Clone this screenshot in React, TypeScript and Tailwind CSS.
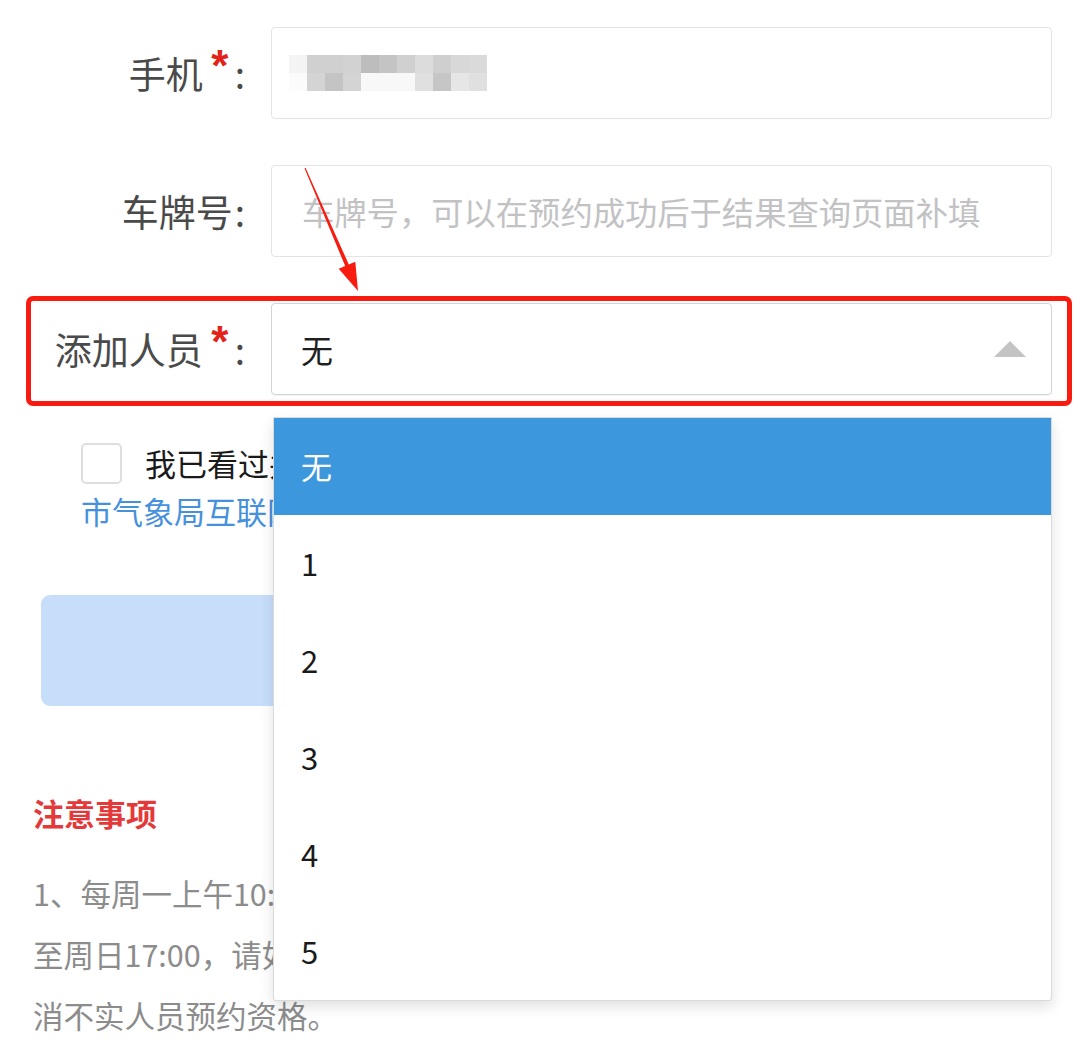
import { ReactNode } from 'react'

const FONT = "font-['Noto_Sans_CJK_SC','Noto_Sans',sans-serif]"

// mosaic over the phone number (two rows of 18px blocks)
const MOSAIC: string[][] = [
  ['#f4f4f4', '#d0d0d0', '#d0d0d0', '#d2d2d2', '#bdbdbd', '#c4c4c4', '#d0d0d0', '#dcdcdc', '#cfcfcf', '#d8d8d8', '#dadada'],
  ['#fbfbfb', '#d4d4d4', '#c4c4c4', '#d4d4d4', '#f8f8f8', '#f8f8f8', '#f8f8f8', '#e0e0e0', '#c6c6c6', '#e6e6e6', '#e0e0e0'],
]

const OPTIONS = ['无', '1', '2', '3', '4', '5']

function Label({ text, required }: { text: string; required?: boolean }) {
  return (
    <div className="w-[245px] shrink-0 flex items-center justify-end text-[37px] text-[#4a4a4a] leading-none">
      <span>{text}</span>
      {required && (
        <span className="w-[30px] pl-[4px] text-center -mt-[14px] text-[44px] leading-none font-bold text-[#e3231a] font-['Liberation_Sans',sans-serif]">
          *
        </span>
      )}
      <span className="ml-[2px]">:</span>
    </div>
  )
}

function Row({ label, required, children }: { label: string; required?: boolean; children: ReactNode }) {
  return (
    <div className="flex items-center h-[92px] pr-[22px]">
      <Label text={label} required={required} />
      <div className="ml-[26px] flex-1 h-full">{children}</div>
    </div>
  )
}

export default function App() {
  return (
    <div className={`relative w-[1074px] h-[1043px] overflow-hidden bg-white ${FONT}`}>
      <div className="pt-[27px] flex flex-col gap-[46px]">
        <Row label="手机" required>
          <div className="h-full border border-[#e3e3e3] rounded-[4px] flex items-center pl-[17px]">
            <div className="flex flex-col">
              {MOSAIC.map((row, i) => (
                <div key={i} className="flex">
                  {row.map((c, j) => (
                    <div key={j} className="w-[18px] h-[18px]" style={{ background: c }} />
                  ))}
                </div>
              ))}
            </div>
          </div>
        </Row>

        <Row label="车牌号">
          <div className="h-full border border-[#e3e3e3] rounded-[4px] flex items-center pl-[30px] text-[32.3px] text-[#c2c2c4]">
            车牌号，可以在预约成功后于结果查询页面补填
          </div>
        </Row>

        <div className="relative">
          {/* annotation frame */}
          <div className="absolute left-[26px] right-[2px] -top-[7px] -bottom-[11px] border-[5px] border-[#f71b10] rounded-[7px] pointer-events-none" />
          <Row label="添加人员" required>
            <div className="relative h-full">
              <div className="h-full border border-[#d4d4d4] rounded-[4px] flex items-center justify-between pl-[29px] pr-[25px] text-[32px] text-[#1f1f1f] shadow-[0_1px_1px_rgba(0,0,0,0.05)]">
                <span>无</span>
                <svg width="32" height="16" viewBox="0 0 32 16">
                  <polygon points="0,16 16,0 32,16" fill="#c4c4c4" />
                </svg>
              </div>

              {/* open options list */}
              <div className="absolute z-20 left-[2px] right-0 top-[114px] bg-white border border-[#dadada] rounded-b-[3px] shadow-[0_6px_14px_rgba(0,0,0,0.12)]">
                {OPTIONS.map((o, i) => (
                  <div
                    key={o}
                    className={`h-[97px] flex items-center pl-[27px] text-[31px] ${i === 0 ? 'bg-[#3d97dd] text-white' : 'text-[#1a1a1a]'}`}
                  >
                    {o}
                  </div>
                ))}
              </div>
            </div>
          </Row>
        </div>
      </div>

      {/* agreement (right part lies under the open list) */}
      <div className="mt-[46px] pl-[81px]">
        <div className="flex items-center h-[44px]">
          <div className="shrink-0 w-[41px] h-[41px] border-2 border-[#dedede] rounded-[5px] bg-white" />
          <span className="ml-[23px] text-[31px] text-[#1a1a1a]">我已看过并同意</span>
        </div>
        <div className="h-[52px] flex items-center text-[31px] text-[#4691db]">市气象局互联网参观预约须知</div>
      </div>

      <button className="mt-[58px] ml-[41px] w-[992px] h-[111px] rounded-[9px] bg-[#c7defb] text-white text-[32px]">
        提交预约
      </button>

      <div className="mt-[87px] pl-[33px]">
        <div className="h-[40px] flex items-center text-[31px] font-bold text-[#e4393b]">注意事项</div>
        <div className="mt-[30px] text-[30.5px] leading-[61px] text-[#8c8c8c]">
          <div>1、每周一上午10:00开放下周预约，预约时间截止</div>
          <div>至周日17:00，请如实填写参观人员信息，否则将取</div>
          <div>消不实人员预约资格。</div>
        </div>
      </div>

      {/* annotation arrow */}
      <svg className="absolute left-0 top-0 pointer-events-none z-30" width="1074" height="1043">
        <polygon
          points="304.5,168.2 305.5,167.8 348.8,264.5 355.3,261.8 358,291 338.7,268.8 345.2,266.1"
          fill="#f71b10"
        />
      </svg>
    </div>
  )
}
